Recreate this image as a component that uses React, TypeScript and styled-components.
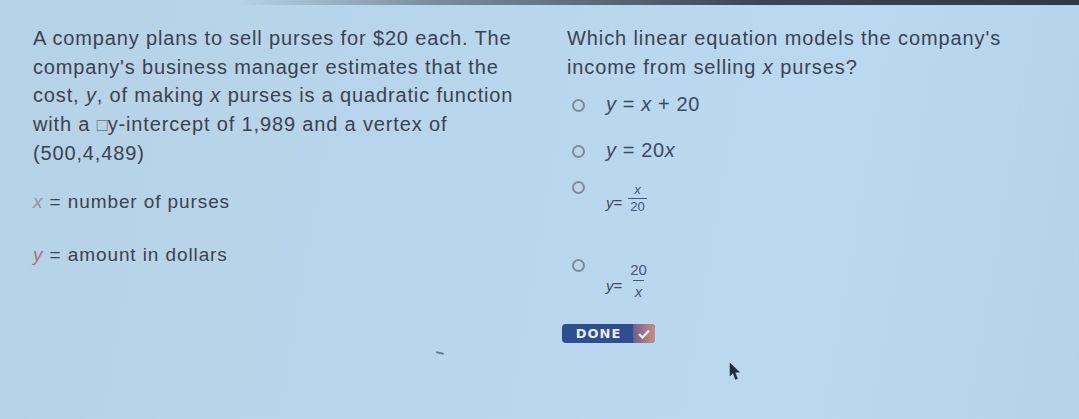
import styled, { createGlobalStyle } from "styled-components";

const GlobalStyle = createGlobalStyle`
    html, body {
        margin: 0;
        padding: 0;
        width: 1079px;
        height: 419px;
        overflow: hidden;
    }
    body {
        font-family: "Liberation Sans", Arial, sans-serif;
    }
`;

interface OptionProps {
    top?: number;
}

interface FractionProps {
    big?: boolean;
}

export default function App() {
    return (
        <Screen>
            <GlobalStyle />
            <TopBezel />
            <Columns>
                <Passage>
                    <Para>
                        A company plans to sell purses for $20 each. The
                        <br />
                        company's business manager estimates that the
                        <br />
                        cost, <Var>y</Var>, of making <Var>x</Var> purses is a quadratic function
                        <br />
                        with a <Box>□</Box>y-intercept of 1,989 and a vertex of
                        <br />
                        (500,4,489)
                    </Para>
                    <Legend>
                        <VarX>x</VarX> = number of purses
                    </Legend>
                    <Legend>
                        <VarY>y</VarY> = amount in dollars
                    </Legend>
                </Passage>
                <Question>
                    <Prompt>
                        Which linear equation models the company's
                        <br />
                        income from selling <Var>x</Var> purses?
                    </Prompt>
                    <Options>
                        <Option>
                            <Radio />
                            <Equation>
                                <Var>y</Var> = <Var>x</Var> + 20
                            </Equation>
                        </Option>
                        <Option top={25}>
                            <Radio />
                            <Equation>
                                <Var>y</Var> = 20<Var>x</Var>
                            </Equation>
                        </Option>
                        <Option top={15}>
                            <Radio />
                            <FractionEquation>
                                <Small>
                                    <Var>y</Var>=
                                </Small>
                                <Fraction>
                                    <Num><Var>x</Var></Num>
                                    <Den>20</Den>
                                </Fraction>
                            </FractionEquation>
                        </Option>
                        <Option top={40}>
                            <Radio />
                            <FractionEquation>
                                <Small>
                                    <Var>y</Var>=
                                </Small>
                                <Fraction big>
                                    <Num>20</Num>
                                    <Den><Var>x</Var></Den>
                                </Fraction>
                            </FractionEquation>
                        </Option>
                    </Options>
                    <DoneButton>
                        <DoneLabel>DONE</DoneLabel>
                        <DoneCheck>
                            <svg width="12" height="10" viewBox="0 0 12 10">
                                <path d="M1 5 L4.5 8.5 L11 1.5" fill="none" stroke="#f4e7e2" strokeWidth="2.4" />
                            </svg>
                        </DoneCheck>
                    </DoneButton>
                </Question>
            </Columns>
            <Speck />
            <Cursor>
                <svg width="12" height="20" viewBox="0 0 12 20">
                    <path d="M1 1 L1 14 L4 11 L6.5 17.5 L8.5 16.6 L6 10.2 L10.5 10.2 Z" fill="#1f2a3a" stroke="#2a3a4a" strokeWidth="0.6" />
                </svg>
            </Cursor>
        </Screen>
    );
}

const Screen = styled.div`
    position: relative;
    width: 1079px;
    height: 419px;
    overflow: hidden;
    background: linear-gradient(100deg, #b6d2e6 0%, #b8d6ec 45%, #bad9f0 75%, #b4d3eb 100%);
    color: #3a4351;
`;

const TopBezel = styled.div`
    height: 5px;
    background: linear-gradient(90deg, rgba(60, 70, 85, 0) 22%, rgba(60, 70, 85, 0.5) 40%, #3d4654 70%, #2f3844 100%);
`;

const Columns = styled.div`
    display: grid;
    grid-template-columns: 534px 1fr;
    padding: 19px 0 0 33px;
`;

const Passage = styled.div`
    display: flex;
    flex-direction: column;
`;

const Para = styled.p`
    margin: 0;
    white-space: nowrap;
    font-size: 20px;
    line-height: 28.5px;
    letter-spacing: 0.85px;
`;

const Var = styled.i`
    font-style: italic;
`;

const Box = styled.span`
    font-size: 0.9em;
    color: #6b7380;
    letter-spacing: 0;
`;

const Legend = styled.p`
    margin: 20px 0 0;
    font-size: 19px;
    line-height: 28px;
    letter-spacing: 0.9px;
    & + & {
        margin-top: 25px;
    }
`;

const VarX = styled(Var)`
    color: #8d93a4;
`;

const VarY = styled(Var)`
    color: #b26a86;
`;

const Question = styled.div`
    display: flex;
    flex-direction: column;
`;

const Prompt = styled.p`
    margin: 0;
    white-space: nowrap;
    font-size: 20px;
    line-height: 28.5px;
    letter-spacing: 0.9px;
`;

const Options = styled.div`
    display: flex;
    flex-direction: column;
    margin-top: 13px;
`;

const Option = styled.div<OptionProps>`
    display: flex;
    align-items: flex-start;
    gap: 21px;
    margin-left: 5px;
    margin-top: ${(p) => (p.top ? p.top : 0)}px;
`;

const Radio = styled.span`
    flex: none;
    width: 9px;
    height: 9px;
    margin-top: 5px;
    border: 2px solid #7f8a98;
    border-radius: 50%;
`;

const Equation = styled.div`
    display: flex;
    align-items: center;
    font-size: 20px;
    line-height: 22px;
    letter-spacing: 0.6px;
    color: #3c4a60;
    margin-top: -1px;
    white-space: pre;
`;

const FractionEquation = styled(Equation)`
    margin-top: 6px;
`;

const Small = styled.span`
    font-size: 15px;
    margin-top: 10px;
    letter-spacing: 0;
`;

const Fraction = styled.span<FractionProps>`
    display: inline-flex;
    flex-direction: column;
    align-items: center;
    margin-left: 6px;
    font-size: ${(p) => (p.big ? 15 : 13)}px;
    line-height: ${(p) => (p.big ? 19 : 14)}px;
    letter-spacing: 0;
    color: #415680;
`;

const Num = styled.span`
    padding: 0 2px 1px;
`;

const Den = styled.span`
    padding: 1px 2px 0;
    border-top: 1.5px solid #415680;
`;

const DoneButton = styled.div`
    display: flex;
    align-items: stretch;
    width: 93px;
    height: 19px;
    margin-top: 23px;
    margin-left: -5px;
    border-radius: 4px;
    overflow: hidden;
    background: #2e4f8d;
`;

const DoneLabel = styled.span`
    flex: 1;
    display: flex;
    align-items: center;
    justify-content: center;
    padding-left: 2px;
    font-family: "DejaVu Sans", sans-serif;
    font-weight: bold;
    font-size: 13px;
    letter-spacing: 1px;
    color: #e6ecf6;
`;

const DoneCheck = styled.span`
    width: 22px;
    display: flex;
    align-items: center;
    justify-content: center;
    background: linear-gradient(90deg, #6d5f8a, #c98f86);
`;

const Speck = styled.span`
    position: absolute;
    left: 436px;
    top: 352px;
    width: 8px;
    height: 2px;
    border-radius: 1px;
    background: rgba(40, 50, 70, 0.6);
    transform: rotate(12deg);
`;

const Cursor = styled.div`
    position: absolute;
    left: 729px;
    top: 362px;
`;
